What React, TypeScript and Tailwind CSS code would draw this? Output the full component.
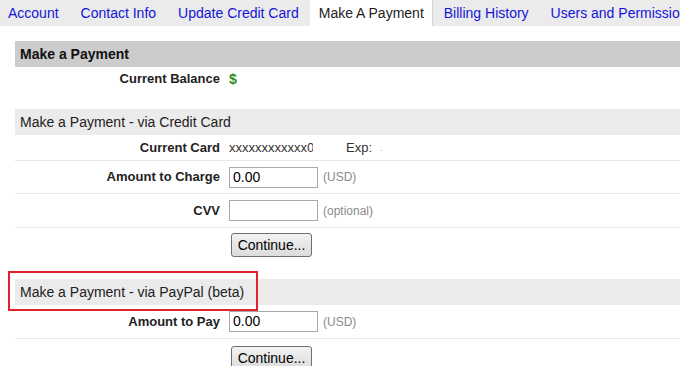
import React from "react";

const tabs = ["Account", "Contact Info", "Update Credit Card", "Make A Payment", "Billing History", "Users and Permissions"];

function Row({ label, children, line = true, h = "h-[33px]" }: { label?: string; children: React.ReactNode; line?: boolean; h?: string }) {
  return (
    <div className={`flex items-center ${h} ${line ? "border-b border-[#e6e6e6]" : ""}`}>
      <div className="w-[209px] shrink-0 pr-[4px] text-right text-[13px] font-bold text-[#222]">{label}</div>
      <div className="flex items-center pl-[5px]">{children}</div>
    </div>
  );
}

function AmountInput({ value = "" }: { value?: string }) {
  return (
    <input
      defaultValue={value}
      className="h-[21px] w-[89px] border border-[#a9a9a9] bg-white px-[3px] text-[14px] text-black outline-none"
    />
  );
}

function Note({ children }: { children: React.ReactNode }) {
  return <span className="ml-[5px] text-[12px] text-[#8a8a8a]">{children}</span>;
}

function ContinueButton() {
  return (
    <button className="h-[24px] w-[81px] rounded-[3px] border border-[#707070] bg-gradient-to-b from-[#f2f2f2] to-[#dcdcdc] text-[14px] text-black">
      Continue...
    </button>
  );
}

export default function App() {
  return (
    <div className="h-[366px] w-[680px] overflow-hidden bg-white font-['Liberation_Sans',Arial,sans-serif]">
      {/* tabs */}
      <div className="flex h-[26px] items-stretch whitespace-nowrap bg-[#ebebeb] text-[14px]">
        {tabs.map((t, i) => (
          <div
            key={t}
            className={`flex items-center px-[11px] ${i === 0 ? "pl-2" : ""} ${
              t === "Make A Payment" ? "border-r border-[#d4d4d4] bg-white pl-[9px] pr-[8px] text-[#222]" : "text-[#1414d8]"
            }`}
          >
            {t}
          </div>
        ))}
      </div>

      <div className="pl-[15px] pt-[15px]">
        <div className="flex h-[26px] items-center bg-[#cccccc] pl-[5px] text-[14px] font-bold text-[#111]">Make a Payment</div>
        <Row label="Current Balance" line={false} h="h-[24px]">
          <span className="text-[14px] font-bold text-[#2e8b22]">$</span>
        </Row>

        <div className="mt-[18px] flex h-[26px] items-center bg-[#ebebeb] pl-[5px] text-[14px] text-[#222]">Make a Payment - via Credit Card</div>
        <Row label="Current Card" h="h-[26px]">
          <span className="w-[84px] overflow-hidden whitespace-nowrap text-[13px] text-[#333]">xxxxxxxxxxxx0</span>
          <span className="ml-[33px] text-[13px] text-[#333]">Exp:</span>
          <span className="ml-[8px] text-[10px] text-[#bbb]">.</span>
        </Row>
        <Row label="Amount to Charge">
          <AmountInput value="0.00" />
          <Note>(USD)</Note>
        </Row>
        <Row label="CVV" h="h-[34px]">
          <AmountInput />
          <Note>(optional)</Note>
        </Row>
        <Row line={false} h="h-[34px]">
          <div className="pl-[2px]">
            <ContinueButton />
          </div>
        </Row>

        <div className="relative mt-[17px]">
          <div className="flex h-[26px] items-center bg-[#ebebeb] pl-[5px] text-[14px] text-[#222]">Make a Payment - via PayPal (beta)</div>
          <div className="pointer-events-none absolute left-[-7px] top-[-8px] h-[40px] w-[250px] border-2 border-[#e3212d]" />
        </div>
        <Row label="Amount to Pay" h="h-[34px]">
          <AmountInput value="0.00" />
          <Note>(USD)</Note>
        </Row>
        <div className="flex h-[34px] items-start pl-[216px] pt-[7px]">
          <ContinueButton />
        </div>
      </div>
    </div>
  );
}
